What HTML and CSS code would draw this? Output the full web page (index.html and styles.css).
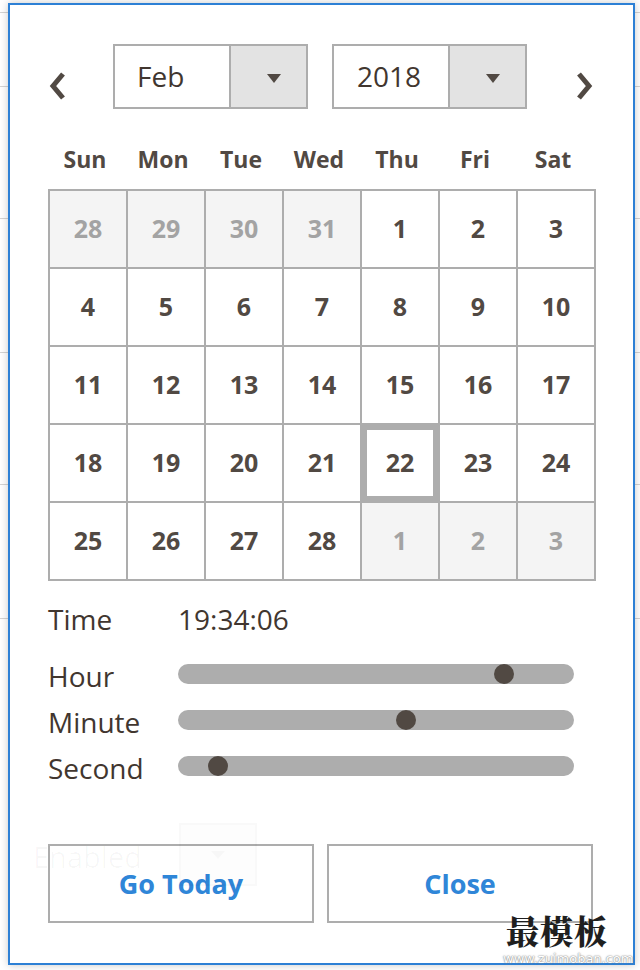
FILE: index.html
```html
<!DOCTYPE html>
<html lang="en">
<head>
<meta charset="utf-8">
<title>Date picker</title>
<link rel="stylesheet" href="styles.css">
</head>
<body>
<div class="page">
  <div class="bg-rows">
    <div class="bg-row r1"></div>
    <div class="bg-row r2"></div>
    <div class="bg-row r3"></div>
    <div class="bg-row r4"></div>
    <div class="bg-row r5"></div>
    <div class="bg-row r6"></div>
  </div>

  <div class="popup">
    <div class="dp-header">
      <button class="nav prev" aria-label="Previous">
        <svg width="20" height="28" viewBox="0 0 20 28"><polyline points="15,2 5,14 15,26" fill="none" stroke="#514943" stroke-width="5"/></svg>
      </button>
      <div class="select month">
        <span class="sel-value">Feb</span>
        <span class="sel-btn"><i class="tri"></i></span>
      </div>
      <div class="select year">
        <span class="sel-value">2018</span>
        <span class="sel-btn"><i class="tri"></i></span>
      </div>
      <button class="nav next" aria-label="Next">
        <svg width="20" height="28" viewBox="0 0 20 28"><polyline points="5,2 15,14 5,26" fill="none" stroke="#514943" stroke-width="5"/></svg>
      </button>
    </div>

    <div class="daynames">
      <span>Sun</span><span>Mon</span><span>Tue</span><span>Wed</span><span>Thu</span><span>Fri</span><span>Sat</span>
    </div>

    <div class="cal-grid">
      <span class="day other">28</span><span class="day other">29</span><span class="day other">30</span><span class="day other">31</span><span class="day">1</span><span class="day">2</span><span class="day">3</span>
      <span class="day">4</span><span class="day">5</span><span class="day">6</span><span class="day">7</span><span class="day">8</span><span class="day">9</span><span class="day">10</span>
      <span class="day">11</span><span class="day">12</span><span class="day">13</span><span class="day">14</span><span class="day">15</span><span class="day">16</span><span class="day">17</span>
      <span class="day">18</span><span class="day">19</span><span class="day">20</span><span class="day">21</span><span class="day today">22</span><span class="day">23</span><span class="day">24</span>
      <span class="day">25</span><span class="day">26</span><span class="day">27</span><span class="day">28</span><span class="day other">1</span><span class="day other">2</span><span class="day other">3</span>
    </div>

    <div class="time-row">
      <span class="t-label">Time</span>
      <span class="t-value">19:34:06</span>
    </div>

    <div class="sliders">
      <div class="s-row">
        <span class="s-label">Hour</span>
        <div class="track"><span class="handle" style="left:316px"></span></div>
      </div>
      <div class="s-row">
        <span class="s-label">Minute</span>
        <div class="track"><span class="handle" style="left:218px"></span></div>
      </div>
      <div class="s-row">
        <span class="s-label">Second</span>
        <div class="track"><span class="handle" style="left:30px"></span></div>
      </div>
    </div>

    <div class="actions">
      <button class="btn">Go Today</button>
      <button class="btn">Close</button>
    </div>
  </div>

  <div class="ghost">
    <span class="ghost-text">Enabled</span>
    <span class="ghost-box"><i class="ghost-tri"></i></span>
  </div>

  <div class="watermark">
    <span class="wm-cn">最模板</span>
    <span class="wm-url">www.zuimoban.com</span>
  </div>
</div>
</body>
</html>
```

FILE: styles.css
```css
* { box-sizing: border-box; }

html, body {
  margin: 0;
  padding: 0;
  background: #ffffff;
}

body {
  font-family: "Open Sans", "Noto Sans", Arial, sans-serif;
  color: #41362f;
}

.page {
  position: relative;
  width: 640px;
  height: 970px;
  overflow: hidden;
}

/* underlying page rows */
.bg-rows {
  display: flex;
  flex-direction: column;
}
.bg-row { border-bottom: 1px solid #d4d4d4; }
.r1 { height: 13px; }
.r2 { height: 74px; }
.r3 { height: 132px; }
.r4 { height: 134px; }
.r5 { height: 132px; }
.r6 { height: 134px; }

/* popup */
.popup {
  position: absolute;
  left: 8px;
  top: 3px;
  width: 627px;
  height: 962px;
  background: #ffffff;
  border: 2px solid #2d80d5;
  box-shadow: 0 0 8px rgba(0, 0, 0, 0.22);
  padding: 39px 36px 0 38px;
}

.dp-header {
  display: flex;
  align-items: center;
  height: 65px;
}

.nav {
  width: 20px;
  height: 28px;
  padding: 0;
  margin: 19px 0 0 0;
  border: 0;
  background: none;
  display: flex;
}

.month { margin-left: 45px; }
.year { margin-left: 24px; }
.next { margin-left: 47px; }

.select {
  width: 195px;
  height: 65px;
  border: 2px solid #adadad;
  display: flex;
}

.sel-value {
  width: 114px;
  padding-left: 22px;
  font-size: 28px;
  line-height: 61px;
  color: #41362f;
}
.year .sel-value { padding-left: 23px; }

.sel-btn {
  flex: 1;
  background: #e3e3e3;
  border-left: 2px solid #adadad;
  display: flex;
  align-items: center;
  justify-content: center;
  padding-left: 11px;
  padding-top: 3px;
}

.tri {
  width: 0;
  height: 0;
  border-left: 7px solid transparent;
  border-right: 7px solid transparent;
  border-top: 9px solid #514943;
}

/* day names */
.daynames {
  display: grid;
  grid-template-columns: repeat(7, 78px);
  margin: 35px 0 0 -2px;
  height: 30px;
}
.daynames span {
  text-align: center;
  font-weight: 700;
  font-size: 23px;
  line-height: 30px;
  color: #514943;
}

/* calendar grid */
.cal-grid {
  margin-top: 15px;
  display: grid;
  grid-template-columns: repeat(7, 76px);
  grid-auto-rows: 76px;
  gap: 2px;
  padding: 2px;
  background: #adadad;
  width: 548px;
}

.day {
  background: #ffffff;
  display: flex;
  align-items: center;
  justify-content: center;
  font-size: 25px;
  font-weight: 700;
  color: #514943;
  padding-bottom: 2px;
}

.day.other {
  background: #f4f4f4;
  color: #a3a3a3;
}

.day.today {
  box-shadow: inset 0 0 0 5px #adadad;
}

/* time */
.time-row {
  display: flex;
  margin-top: 18px;
  height: 40px;
  font-size: 28px;
  line-height: 40px;
  color: #41362f;
}
.t-label { width: 130px; }

.sliders {
  margin-top: 12px;
}

.s-row {
  display: flex;
  align-items: center;
  height: 46px;
}

.s-label {
  width: 130px;
  font-size: 28px;
  line-height: 42px;
  padding-top: 4px;
  align-self: flex-start;
  color: #41362f;
}

.track {
  position: relative;
  width: 396px;
  height: 20px;
  border-radius: 10px;
  background: #adadad;
}

.handle {
  position: absolute;
  top: 0;
  width: 20px;
  height: 20px;
  border-radius: 50%;
  background: #514943;
}

/* buttons */
.actions {
  display: flex;
  gap: 13px;
  margin-top: 55px;
}

.btn {
  width: 266px;
  height: 79px;
  border: 2px solid #adadad;
  background: transparent;
  font-family: "Open Sans", "Noto Sans", Arial, sans-serif;
  font-size: 27px;
  font-weight: 700;
  color: #2f86d8;
  padding: 0;
}

/* faint underlying control showing through */
.ghost {
  position: absolute;
  left: 33px;
  top: 823px;
  display: flex;
  align-items: flex-start;
  pointer-events: none;
}
.ghost-text {
  font-size: 29px;
  line-height: 32px;
  margin-top: 18px;
  color: rgba(0, 0, 0, 0.03);
}
.ghost-box {
  width: 78px;
  height: 63px;
  margin-left: 37px;
  border: 2px solid rgba(0, 0, 0, 0.015);
  background: rgba(0, 0, 0, 0.008);
  display: flex;
  align-items: center;
  justify-content: center;
}
.ghost-tri {
  width: 0;
  height: 0;
  border-left: 7px solid transparent;
  border-right: 7px solid transparent;
  border-top: 8px solid rgba(0, 0, 0, 0.025);
}

/* watermark */
.watermark {
  position: absolute;
  left: 503px;
  top: 912px;
  display: flex;
  flex-direction: column;
  align-items: flex-start;
  pointer-events: none;
}
.wm-cn {
  font-family: "Noto Serif CJK SC", "Noto Sans CJK SC", serif;
  font-weight: 900;
  font-size: 33px;
  line-height: 36px;
  letter-spacing: 1px;
  margin-left: 3px;
  color: #1f1f1f;
}
.wm-url {
  margin-top: 3px;
  font-family: "DejaVu Sans", sans-serif;
  font-size: 13px;
  line-height: 15px;
  color: #ffffff;
  text-shadow: 0 0 2px #777, 0 0 1px #999;
}
```
